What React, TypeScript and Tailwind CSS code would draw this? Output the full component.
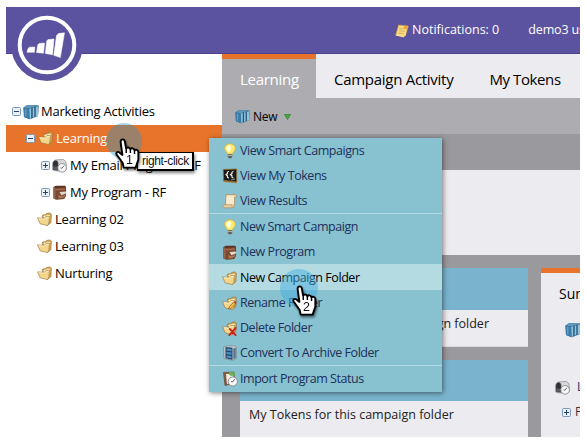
import React from "react";

type P = { className?: string };

const Books = ({ className = "h-4 w-4" }: P) => (
  <svg viewBox="0 0 16 16" className={"shrink-0 " + className}>
    <path d="M.5 3.500 L4.500 1 L15.800 1.500 L15 12 L7 15.300 L1 13Z" fill="#2a5878" />
    <path d="M.5 3.500 L6 4.800 L6.500 15.300 L1 13Z" fill="#3b7ca8" />
    <path d="M6.200 4.700 L8.200 4 V14.300 L6.700 15.200Z M9.700 3.800 L11.300 3.200 V13 L9.700 13.800Z M12.700 3 L15.500 2 L15 12 L12.700 12.800Z" fill="#8fc4e0" />
    <path d="M.5 3.500 L4.500 1 L15.800 1.500 L6 4.600Z" fill="#5f97ba" />
    <path d="M2.800 5V12.500" stroke="#6ba9ce" />
  </svg>
);

const FolderShape = () => (
  <g>
    <path d="M5.500 5 L6 3.200 L9.500 2.800 L10.200 1.600 L13.800 1 L15.300 2.300 L14.800 11.500 L11 14.300Z" fill="#d9ab55" stroke="#8f713b" strokeWidth=".7" strokeLinejoin="round" />
    <path d="M7 4.300 L13.700 3 L13.300 8 L8 8.500Z" fill="#fdf0c6" />
    <path d="M.5 6.200 L7.600 6.800 L9.300 5 L13.400 4.600 L12.600 12 L11.300 14.500 L3.300 12.600Z" fill="#f3d58c" stroke="#9a7a40" strokeWidth=".7" strokeLinejoin="round" />
    <path d="M1.800 7.100 L8 7.700 L9.800 5.900 L12.400 5.600" stroke="#fff4ce" strokeWidth=".9" fill="none" />
  </g>
);
const Folder = ({ className = "" }: P) => (
  <svg viewBox="0 0 16 16" className={"h-[15px] w-[15px] shrink-0 " + className}><FolderShape /></svg>
);
const FolderEdit = () => (
  <svg viewBox="0 0 16 16" className="h-[15px] w-[15px] shrink-0">
    <FolderShape />
    <path d="M7 14 L8 11 L12.500 6.500 L14.500 8.500 L10 13Z" fill="#f3bd43" stroke="#80551c" strokeWidth=".7" />
    <path d="M12.500 6.500 L14 5.200 L15.700 7 L14.500 8.500Z" fill="#c43d36" />
  </svg>
);
const FolderDelete = () => (
  <svg viewBox="0 0 16 16" className="h-[15px] w-[15px] shrink-0">
    <FolderShape />
    <path d="M8.300 8.500 L14.500 15 M14.500 7.500 L7.800 15" stroke="#cf1f1b" strokeWidth="2" strokeLinecap="round" />
  </svg>
);
const Program = ({ className = "" }: P) => (
  <svg viewBox="0 0 16 16" className={"h-[15px] w-[15px] shrink-0 " + className}>
    <path d="M1.500 2 L4 .8 H14 L15 2 V11.500 L13 15 L4 15.500 L1.500 14Z" fill="#5b3423" />
    <path d="M1.500 2 L4 3.200 V15.500 L1.500 14Z" fill="#94664b" />
    <path d="M4 3.200 L14.500 2.500 V11 L12.500 15 L4 15.500Z" fill="#7c4a32" />
    <path d="M4 4.200 L14 3.500 V5 L4 5.800Z" fill="#a0694a" />
    <path d="M6 11 L11 12 L15 9.500 L13 13 L8 14.500Z" fill="#a97b5c" />
    <path d="M8 7.500 L14.500 6.800 L15.300 8.800 L10 10.800Z" fill="#e5d8c8" />
  </svg>
);
const Clock = () => (
  <g>
    <circle cx="10.800" cy="10.500" r="4.600" fill="#f5f6f5" stroke="#8b8f90" strokeWidth="1" />
    <path d="M10.500 11 L12.800 8.200 M10.500 11 L9 10.500" stroke="#444" strokeWidth=".8" fill="none" />
  </g>
);
const Email = ({ className = "" }: P) => (
  <svg viewBox="0 0 16 16" className={"h-[15px] w-[15px] shrink-0 " + className}>
    <path d="M4 2 L12 1.500 Q15.500 3 15.300 7 V12 L6 14 L1 13Z" fill="#d7d8da" stroke="#85878a" strokeWidth=".7" />
    <path d="M.6 6.500 Q1 2 4 2.300 Q7 2.500 6.700 7.500 V13.500 L.8 12.500Z" fill="#303136" stroke="#999" strokeWidth=".6" />
    <path d="M1.500 8.500 L6 9.500 V12.500 L1.500 12Z" fill="#5b5b62" />
    <Clock />
  </svg>
);
const Bulb = () => (
  <svg viewBox="0 0 16 16" className="h-4 w-4 shrink-0">
    <path d="M8 .8 C4.500 .8 2.400 3.200 2.600 5.800 C2.800 8 5.200 9 5.500 11.200 H10.500 C10.800 9 13.200 8 13.400 5.800 C13.600 3.200 11.500 .8 8 .8Z" fill="#fbeb72" stroke="#d0af43" strokeWidth=".8" />
    <path d="M4.500 6 Q4.300 2.500 8.500 2 Q9.500 4.500 8 8.500 L6.300 9Z" fill="#fffde0" />
    <path d="M5.800 11.200 H10.200 V14 L9 15.300 H7 L5.800 14Z" fill="#5f5e5b" />
    <path d="M5.800 12.600 H10.200" stroke="#ddd" strokeWidth=".7" />
  </svg>
);
const Token = () => (
  <svg viewBox="0 0 16 16" className="h-4 w-4 shrink-0">
    <path d="M.3 12 L14.500 13.500 L15 15.300 L2 14Z" fill="#a77e43" />
    <path d="M1.200 1.500 L14.700 1 V14 L1.700 12.500Z" fill="#1d1b18" stroke="#8d6d3c" strokeWidth=".9" />
    <path d="M7 3.500 Q5 3.500 5.500 5.500 L4 6.700 L5.500 7.800 Q5 9.800 7 9.800 M11.500 3.500 Q9.500 3.500 10 5.500 L8.500 6.700 L10 7.800 Q9.500 9.800 11.500 9.800" stroke="#eee" strokeWidth="1.200" fill="none" />
    <path d="M9 12 L13 11.200" stroke="#aaa" strokeWidth=".8" />
  </svg>
);
const Scroll = () => (
  <svg viewBox="0 0 16 16" className="h-4 w-4 shrink-0">
    <path d="M4 1.500 H13.800 Q15.600 2.800 14 4.500 H12.500 V12.500 Q12 14.800 10 14.800 H2 Q-.2 13 1.500 11.500 H3.500Z" fill="#e6cda4" stroke="#a88b62" strokeWidth=".7" />
    <path d="M4.800 2.500 H11.500 Q12.300 4 12 11 L4 11.500Z" fill="#f8ebd0" />
    <path d="M2 11.700 H10 Q9.500 13.500 10.500 14.200" stroke="#b5976b" strokeWidth=".7" fill="none" />
  </svg>
);
const Archive = () => (
  <svg viewBox="0 0 16 16" className="h-4 w-4 shrink-0">
    <path d="M1.500 2 L5 .8 H12.500 L14.500 2 V13.300 L11 15.300 L2 13.500Z" fill="#c2ccd2" stroke="#61707a" strokeWidth=".5" />
    <path d="M3.500 2 L10.500 2.700 V14.800 L3.500 13.300Z" fill="#24476a" />
    <path d="M4.500 3.500 L9.500 4.100 V6.300 L4.500 5.600Z M4.500 7 L9.500 7.600 V9.800 L4.500 9.100Z M4.500 10.400 L9.500 11.100 V13.200 L4.500 12.400Z" fill="#4c90c8" />
    <path d="M11.300 3.500 L13.800 2.700 V12.800 L11.300 14.500Z" fill="#55768e" />
  </svg>
);
const Import = () => (
  <svg viewBox="0 0 16 16" className="h-4 w-4 shrink-0">
    <path d="M1.500 1.500 L12 1 L13 12 L3 14.500Z" fill="#8a5a3c" stroke="#674733" strokeWidth=".7" />
    <path d="M4 3 L11 2.500 L12 11 L5 13Z" fill="#f0f0e8" />
    <path d="M6.500 3 L7.500 1 H12.500 L13 4.500 L9 5Z" fill="#6bae57" />
    <Clock />
  </svg>
);
const Note = () => (
  <svg viewBox="0 0 14 14" className="h-[14px] w-[14px] shrink-0">
    <path d="M3.500 1 L13.300 2 L11 10.500 L8.500 12.800 L.8 11Z" fill="#f9dc84" stroke="#c39432" strokeWidth=".6" />
    <path d="M4.500 4.500 L8.500 5 M4 6.700 L9.500 7.300 M3.200 9 L8.500 9.700" stroke="#c09a48" strokeWidth=".7" />
    <circle cx="10.500" cy="3.500" r="2" fill="#f5a33e" />
    <path d="M.8 11 L8.500 12.800 L11 10.500" stroke="#fff0ad" fill="none" />
  </svg>
);

const Toggle = ({ open = false, className = "" }: { open?: boolean; className?: string }) => (
  <svg viewBox="0 0 9 9" className={"h-[9px] w-[9px] shrink-0 " + className}>
    <rect x=".5" y=".5" width="8" height="8" rx="1" fill="#e9eff6" stroke="#7a98b8" />
    <path d={open ? "M2 4.500H7" : "M2 4.500H7M4.500 2V7"} stroke="#2b4266" />
  </svg>
);

const Hand = ({ n }: { n: string }) => (
  <svg viewBox="0 0 26 34" preserveAspectRatio="none" className="h-8 w-[25px] drop-shadow-[1px_2px_1px_rgba(0,0,0,0.5)]">
    <path
      d="M8 1.500 C6.300 1.500 5.700 2.700 5.900 4.500 L7.700 18 L4.300 15.200 C2.500 14 .6 15.800 1.700 17.500 L8 26.500 L9 31.500 L21.500 31.500 L24.300 23 L24.300 15 C24.300 12.300 21.300 11.800 20.300 13.300 C20 10.500 16.800 10.300 15.900 12 C15.300 9.800 12.500 9.600 11.500 11 L10.200 3.500 C10 2.200 9.300 1.500 8 1.500Z"
      fill="#fff" stroke="#000" strokeWidth="2" strokeLinejoin="round"
    />
    <path d="M11.700 11V16 M16 12V16 M20.300 13.500V17" stroke="#000" strokeWidth="1.500" />
    <text x="15" y="28" textAnchor="middle" className="font-['Liberation_Sans',sans-serif] text-[13px]" fill="#111">{n}</text>
  </svg>
);

const Separator = () => <div className="h-px bg-[#b3dae2]" />;
const MenuItem = ({ icon, label, active = false }: { icon: React.ReactNode; label: string; active?: boolean }) => (
  <div className={"flex items-center gap-[3px] pl-[13px] text-[12.500px] " + (active ? "h-[26px] bg-[#b4dbe2] pt-[2px] text-black" : "h-[25px] pt-px text-[#20305a]")}>
    <span className="flex w-[15px] justify-center">{icon}</span>
    <span className="tracking-[-0.45px] whitespace-nowrap">{label}</span>
  </div>
);
const TreeRow = ({ children, className = "" }: { children: React.ReactNode; className?: string }) => (
  <div className={"flex h-[27px] items-center whitespace-nowrap " + className}>{children}</div>
);

export default function App() {
  return (
    <div className="relative h-[442px] w-[586px] overflow-hidden bg-white pt-[7px] pl-[6px] font-['Open_Sans',sans-serif] text-black">
      <div className="flex h-[430px] w-[574px] flex-col overflow-hidden">
        <header className="flex h-[47px] shrink-0 items-center border-b border-[#4c438c] bg-[#5b539f] pt-px pl-[389px] text-[12.500px] whitespace-nowrap text-white">
          <Note />
          <span className="ml-[3px] w-[88px]">Notifications: 0</span>
          <span className="ml-[29px] tracking-[-0.15px]">demo3 user</span>
        </header>
        <div className="flex min-h-0 flex-1">
          <aside className="w-[216px] shrink-0 pt-[44px] text-[13px] tracking-[-0.22px]">
            <TreeRow className="pl-[6px]"><Toggle open /><Books className="mr-[2px] ml-[2px] h-4 w-4" /><span>Marketing Activities</span></TreeRow>
            <TreeRow className="bg-[#e8742b] pl-[20px] text-white"><Toggle open /><Folder className="mr-[3px] ml-[3px]" /><span>Learning</span></TreeRow>
            <TreeRow className="pl-[35px]"><Toggle /><Email className="mr-[3px] ml-[2px]" /><span className="tracking-[-0.26px]">My Email Program - RF</span></TreeRow>
            <TreeRow className="pl-[35px]"><Toggle /><Program className="mr-[3px] ml-[2px]" /><span className="tracking-[-0.26px]">My Program - RF</span></TreeRow>
            <TreeRow className="pl-[31px]"><Folder className="mr-[3px]" /><span>Learning 02</span></TreeRow>
            <TreeRow className="pl-[31px]"><Folder className="mr-[3px]" /><span>Learning 03</span></TreeRow>
            <TreeRow className="pl-[31px]"><Folder className="mr-[3px]" /><span>Nurturing</span></TreeRow>
          </aside>
          <main className="flex min-w-0 flex-1 flex-col bg-[#9a999d]">
            <nav className="flex h-11 shrink-0 bg-[#ecebf0] text-[15px] tracking-[-0.28px] whitespace-nowrap">
              <div className="flex w-[94px] items-center border-t-[5px] border-[#e8742b] bg-[#adadb1] pt-px pl-[18px] text-white">Learning</div>
              <div className="flex items-center pt-[6px] pl-[18px]">Campaign Activity</div>
              <div className="flex items-center pt-[6px] pl-[36px] tracking-[-0.4px]">My Tokens</div>
            </nav>
            <div className="flex h-9 shrink-0 items-center bg-[#adadb1] pt-px pl-[13px] text-[12px]">
              <Books className="h-[15px] w-[15px]" />
              <span className="ml-[3px] tracking-[-0.2px]">New</span>
              <svg viewBox="0 0 7 6" className="ml-[7px] h-[6px] w-[7px]"><path d="M.5.5H6.500L3.500 5.500Z" fill="#45ad3d" stroke="#258329" strokeWidth=".7" /></svg>
            </div>
            <div className="mt-9 ml-[18px] h-[85px] shrink-0 bg-[#ecebf0]" />
            <div className="mt-[13px] flex min-h-0 flex-1 gap-[13px] pl-[18px]">
              <div className="flex w-[288px] shrink-0 flex-col gap-[13px] text-[12.500px] whitespace-nowrap text-[#222]">
                <section className="h-[79px] shrink-0 border-b border-[#dcdce0] bg-[#ecebf0]">
                  <div className="h-[42px] bg-[#79b3cd]" />
                  <p className="pt-[5px] pr-[39px] text-right">Campaigns in this campaign folder</p>
                </section>
                <section className="min-h-0 flex-1 bg-[#ecebf0]">
                  <div className="h-[41px] bg-[#79b3cd]" />
                  <p className="pt-[5px] pl-[9px]">My Tokens for this campaign folder</p>
                </section>
              </div>
              <section className="min-w-0 flex-1 overflow-hidden border-t-[5px] border-[#e8742b] bg-[#ecebf0] whitespace-nowrap">
                <h2 className="pt-[11px] pl-[18px] text-[14px] leading-5">Summary</h2>
                <Books className="mt-[18px] ml-[24px] h-4 w-4" />
                <div className="mt-[40px] ml-[14px] flex items-center gap-[7px] text-[12px] text-[#27306d]"><Email />Learning</div>
                <div className="mt-[7px] ml-[21px] flex items-center gap-[4px] text-[12px] text-[#333]"><Toggle />Programs</div>
              </section>
            </div>
          </main>
        </div>
      </div>

      <svg viewBox="0 0 74 74" className="absolute top-[8px] left-[10px] h-[74px] w-[74px]">
        <circle cx="37" cy="37" r="36" fill="#5b539f" />
        <circle cx="37" cy="37" r="27.300" fill="none" stroke="#fff" strokeWidth="4" />
        <path d="M19.500 39.200 L24.800 39 L24.400 44.300 H17 L18 40.500Z M29 35.500 L34.500 35 L33.500 45.200 L26.500 44.500 L27.800 36.800Z M38 31.600 L44 31 L42.500 46.800 L35.300 45.400 L36.700 33Z M48.500 25.500 L54.500 24.800 L50.300 49.600 L43.800 47.300 L46.500 27.500Z" fill="#fff" stroke="#fff" strokeWidth=".5" strokeLinejoin="round" />
      </svg>

      <div className="absolute top-[138px] left-[209px] flex h-[254px] w-[233px] flex-col bg-[#88c1cf] shadow-[1px_1px_5px_rgba(0,0,0,0.5)]">
        <MenuItem icon={<Bulb />} label="View Smart Campaigns" />
        <MenuItem icon={<Token />} label="View My Tokens" />
        <MenuItem icon={<Scroll />} label="View Results" />
        <Separator />
        <MenuItem icon={<Bulb />} label="New Smart Campaign" />
        <MenuItem icon={<Program />} label="New Program" />
        <MenuItem icon={<Folder />} label="New Campaign Folder" active />
        <MenuItem icon={<FolderEdit />} label="Rename Folder" />
        <MenuItem icon={<FolderDelete />} label="Delete Folder" />
        <MenuItem icon={<Archive />} label="Convert To Archive Folder" />
        <Separator />
        <MenuItem icon={<Import />} label="Import Program Status" />
      </div>

      <div className="absolute top-[123px] left-[106px] h-9 w-9 rounded-full bg-[#2896c8]/40" />
      <div className="absolute top-[152px] left-[137px] flex h-[19px] w-[57px] items-center border border-r-2 border-b-2 border-black bg-white pl-[4px] font-['Liberation_Sans',sans-serif] text-[12px] tracking-[-0.35px] whitespace-nowrap text-[#111] shadow-[1px_2px_3px_rgba(0,0,0,0.5)]">right-click</div>
      <div className="absolute top-[138px] left-[115px]"><Hand n="1" /></div>
      <div className="absolute top-[269px] left-[280px] h-[38px] w-[38px] rounded-full bg-[#45b0de]/50" />
      <div className="absolute top-[285px] left-[292px]"><Hand n="2" /></div>
    </div>
  );
}
